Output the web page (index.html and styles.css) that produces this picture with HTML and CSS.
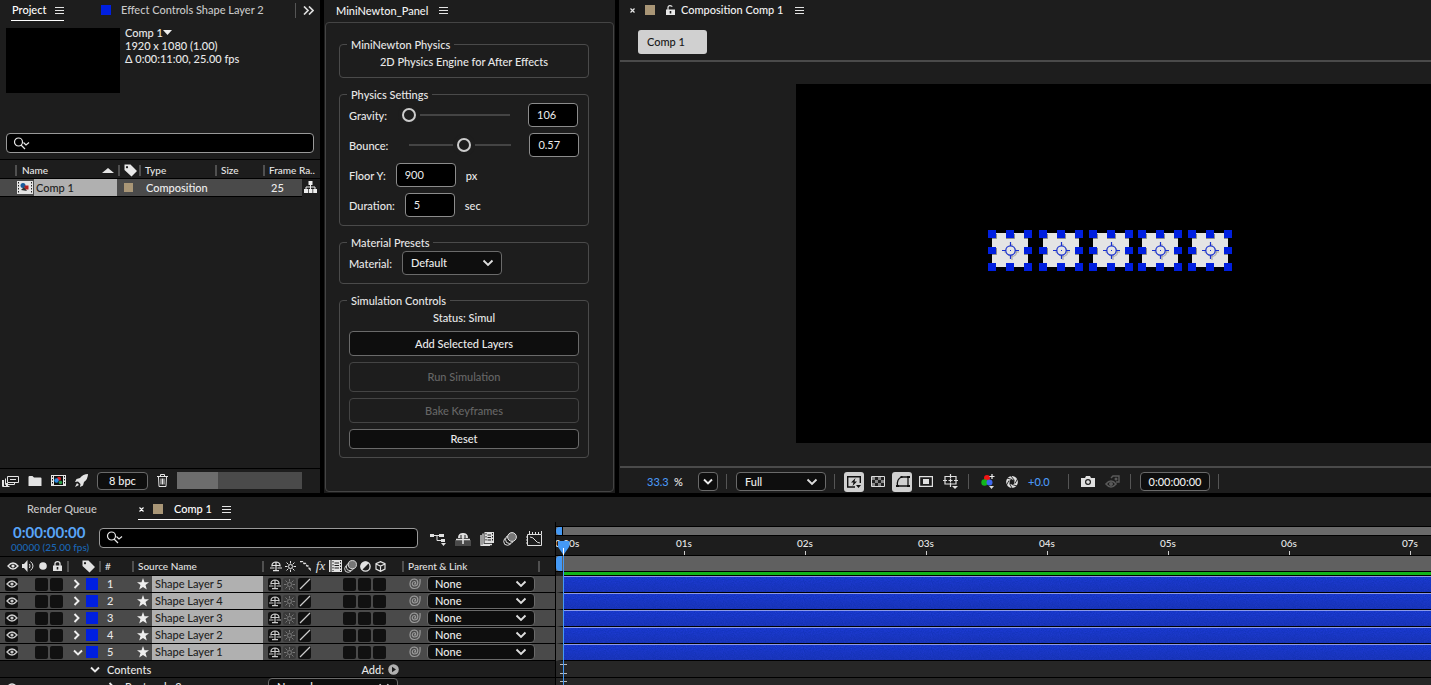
FILE: index.html
```html
<!DOCTYPE html>
<html lang="en">
<head>
<meta charset="utf-8">
<title>Comp 1</title>
<link rel="stylesheet" href="styles.css">
</head>
<body>
<svg class="sprite" aria-hidden="true">
  <symbol id="menu" viewBox="0 0 9 9"><path d="M0 1.5h9M0 4.5h9M0 7.5h9" stroke="currentColor" fill="none"/></symbol>
  <symbol id="close" viewBox="0 0 7 7"><path d="M1.500 1.500l4 4M5.500 1.500l-4 4" stroke="currentColor" stroke-width="1.200" fill="none"/></symbol>
  <symbol id="search" viewBox="0 0 18 13"><circle cx="5.5" cy="5" r="4" stroke="currentColor" stroke-width="1.2" fill="none"/><path d="M8 8l4 4M10.500 5.500l2.500 2.500 3-2.500" stroke="currentColor" stroke-width="1.2" fill="none"/></symbol>
  <symbol id="tag" viewBox="0 0 13 13"><path fill-rule="evenodd" d="M.5.5h6l6.500 6.500-5.500 5.500L.5 6zM3 2a1.100 1.100 0 1 0 .01 0z" fill="currentColor"/></symbol>
  <symbol id="film" viewBox="0 0 16 13"><path d="M0 0h16v13H0z" fill="#e4e4e4"/><path d="M1.500 1v11M14.500 1v11" stroke="#222" stroke-width="1" stroke-dasharray="1.500 1.500"/><circle cx="6" cy="4.500" r="2.500" fill="#175a9c"/><rect x="7.500" y="4.500" width="4" height="4" fill="#b52020"/><path d="M4 9l3-3 3 4z" fill="#333"/></symbol>
  <symbol id="comp" viewBox="0 0 15 11"><path d="M0 0h15v11H0z" fill="#e6e6e6"/><path d="M3 1h9v9H3z" fill="#111"/><path d="M1.500 1v9M13.500 1v9" stroke="#111" stroke-dasharray="1.500 1.500"/><circle cx="8" cy="3.800" r="2" fill="#d22"/><circle cx="5.500" cy="5.500" r="2.200" fill="#2a8de0"/><circle cx="9.500" cy="7.500" r="1.800" fill="#2b9c46"/></symbol>
  <symbol id="tree" viewBox="0 0 13 13"><path d="M4.500 0h4v4h-4zM0 8h4v4H0zM4.700 8h3.800v4H4.700zM9.200 8H13v4H9.200z" fill="currentColor"/><path d="M6.500 4v4M2 8V6h9v2" stroke="currentColor" fill="none"/></symbol>
  <symbol id="interpret" viewBox="0 0 17 12"><path d="M5.500 1.500h11v6h-11zM8 4.500h6" stroke="currentColor" fill="none"/><path d="M3.500 3.500v6h9V8M.5 5v6.500h7" stroke="currentColor" fill="none"/><path d="M0 5h2v6H0zM4 8h2v3H4z" fill="currentColor"/></symbol>
  <symbol id="folder" viewBox="0 0 13 10"><path d="M0 1q0-1 1-1h3l1.500 1.500H12q1 0 1 1V10H0z" fill="currentColor"/></symbol>
  <symbol id="rocket" viewBox="0 0 13 13"><path d="M13 0Q8 0 5 4L1.500 5 0 8l3-.5L5.500 10 5 13l3-1.500L9 8q4-3 4-8zM2 9l2 2-4 2z" fill="currentColor"/></symbol>
  <symbol id="trash" viewBox="0 0 11 13"><path d="M0 2.500h11M3.500 2V.5h4V2M1.500 3l.5 9.500h7l.5-9.500M4 4.500v6M5.500 4.500v6M7 4.500v6" stroke="currentColor" fill="none"/></symbol>
  <symbol id="unlock" viewBox="0 0 9 10"><path fill-rule="evenodd" d="M0 4.500h9V10H0zM3.700 6v2.500h1.600V6z" fill="currentColor"/><path d="M2 5V2.500Q2 .7 4 .7t2 1" stroke="currentColor" stroke-width="1.200" fill="none"/></symbol>
  <symbol id="lock" viewBox="0 0 9 10"><path fill-rule="evenodd" d="M0 4.500h9V10H0zM3.700 6v2.500h1.600V6z" fill="currentColor"/><path d="M2 5V2.700Q2 .7 4.500.7T7 2.700V5" stroke="currentColor" stroke-width="1.300" fill="none"/></symbol>
  <symbol id="eye" viewBox="0 0 12 10"><path d="M1 5q5-6 10 0-5 6-10 0z" stroke="currentColor" stroke-width="1.300" fill="none"/><circle cx="6" cy="5" r="1.600" fill="currentColor"/></symbol>
  <symbol id="speaker" viewBox="0 0 12 12"><path d="M0 4h2l3.500-4v12L2 8H0z" fill="currentColor"/><path d="M7.500 4q1 2 0 4M8.500 1.500q5 4.500 0 9" stroke="currentColor" fill="none"/></symbol>
  <symbol id="dot" viewBox="0 0 8 8"><circle cx="4" cy="4" r="3.800" fill="currentColor"/></symbol>
  <symbol id="shy" viewBox="0 0 12 11"><path d="M2 5.500V4Q2.500 1 6 1t4 3v1.500M6 1v9M0 7h4.500M7.500 7H12M3 9.700h6M2 4.500h8" stroke="currentColor" stroke-width="1.200" fill="none"/></symbol>
  <symbol id="sun" viewBox="0 0 11 11"><circle cx="5.500" cy="5.500" r="2" stroke="currentColor" fill="none"/><path d="M5.500 0v2.500M5.500 8.500V11M0 5.500h2.500M8.500 5.500H11M1.500 1.500l2 2M7.500 7.500l2 2M9.500 1.500l-2 2M3.500 7.500l-2 2" stroke="currentColor" fill="none"/></symbol>
  <symbol id="slash" viewBox="0 0 12 12"><path d="M1 11L11 1" stroke="currentColor" stroke-width="1.300"/></symbol>
  <symbol id="quality" viewBox="0 0 11 11"><path d="M0 .5h2.500l1.500 2h1.500l1.500 2.500h1l1.500 3H11V10" stroke="currentColor" stroke-width="1.300" fill="none" stroke-dasharray="3 1"/></symbol>
  <symbol id="blend" viewBox="0 0 14 14"><path d="M4.500 0h9.500v11H4.500z" fill="currentColor"/><path d="M6 1v9M12.500 1v9" stroke="#1d1d1d" stroke-dasharray="1.500 1.500"/><path d="M7.500 3h3.500M7.500 5.500h3.500M7.500 8h3.500" stroke="#1d1d1d"/><path d="M3 1.500V12.500H12M1 3v10.500h9" stroke="currentColor" stroke-width="1.300" fill="none"/></symbol>
  <symbol id="blendcol" viewBox="0 0 13 12"><path d="M2.500 0H13v12H2.500zM0 0h1.500v12H0z" fill="currentColor"/><path d="M4 1v10M11.500 1v10" stroke="#1d1d1d" stroke-dasharray="1.500 1.500"/><path d="M5.500 3h4.500M5.500 5.500h4.500M5.500 8h4.500" stroke="#1d1d1d"/></symbol>
  <symbol id="blur" viewBox="0 0 14 14"><circle cx="4.500" cy="9.500" r="3.800" stroke="currentColor" fill="#1d1d1d"/><circle cx="6.500" cy="7.500" r="4" stroke="currentColor" fill="#1d1d1d"/><circle cx="9" cy="5" r="4.400" stroke="currentColor" fill="#777"/></symbol>
  <symbol id="adjust" viewBox="0 0 11 11"><circle cx="5.500" cy="5.500" r="4.600" stroke="currentColor" stroke-width="1.400" fill="none"/><path d="M9 2A4.800 4.800 0 0 0 2 9z" fill="currentColor"/></symbol>
  <symbol id="cube" viewBox="0 0 11 11"><path d="M5.500.6l4.500 2v5.500l-4.500 2.300L1 8.100V2.600zM1 3l4.500 2L10 3M5.500 5v5" stroke="currentColor" stroke-width="1.200" fill="none"/></symbol>
  <symbol id="star" viewBox="0 0 12 12"><path d="M6 0l1.500 4.200H12L8.500 7l1.300 4.500L6 8.900 2.200 11.500 3.500 7 0 4.200h4.500z" fill="currentColor"/></symbol>
  <symbol id="right" viewBox="0 0 7 10"><path d="M1.500 1l4 4-4 4" stroke="currentColor" stroke-width="1.900" fill="none"/></symbol>
  <symbol id="down" viewBox="0 0 10 7"><path d="M1 1.500l4 4 4-4" stroke="currentColor" stroke-width="1.900" fill="none"/></symbol>
  <symbol id="spiral" viewBox="0 0 12 12"><path d="M11 1q1 10-6 9.500Q.8 10 1 5.500 1.300 1 5.700 1 9 1.500 8.800 5 8.500 8 5.800 8 3.200 7.800 3.300 5.500 3.500 3.500 5.500 3.500 7 4 6.500 5.800H5" stroke="currentColor" stroke-width="1.200" fill="none"/></symbol>
  <symbol id="flow" viewBox="0 0 16 14"><path d="M0 2h4v3H0zM9 2h5v3H9zM11 7h4v3h-4z" fill="currentColor"/><path d="M3 3.500h7M7 3.500v5h4" stroke="currentColor" fill="none"/><path d="M11 11h5l-2.500 3z" fill="currentColor"/></symbol>
  <symbol id="shymaster" viewBox="0 0 16 14"><path d="M0 8h16v6H0z" fill="#4a4a4a"/><path d="M3 6q0-5 5-5t5 5z" fill="currentColor"/><path d="M8 1v11M1 7.500h14" stroke="currentColor" stroke-width="1.600"/><path d="M6 3v3M10 3v3" stroke="#222"/></symbol>
  <symbol id="graph" viewBox="0 0 17 16"><path d="M1.500 3.500h14v11h-14z" stroke="currentColor" fill="none"/><path d="M4 6q3 0 5 3t5 3M3.500 3V0M6.500 3V1M9.500 3V1M12.500 3V1M15.500 3V0M1 6H0M1 9H0M1 12H0" stroke="currentColor" fill="none"/></symbol>
  <symbol id="fast" viewBox="0 0 14 12"><path d="M8 11H.7V.7h12.600V7" stroke="#111" stroke-width="1.400" fill="none"/><path d="M8.500 2L4 6.500h2.500L5.500 10 10 5.500H7.500zM9 9h5l-2.500 3z" fill="#111"/></symbol>
  <symbol id="checker" viewBox="0 0 14 11"><path d="M.5.5h13v10H.5z" fill="#222" stroke="#ddd"/><path d="M1 1h3v3H1zM7 1h3v3H7zM4 4h3v3H4zM10 4h3v3h-3zM1 7h3v3H1zM7 7h3v3H7z" fill="#888"/></symbol>
  <symbol id="mask" viewBox="0 0 15 13"><path d="M2.500 11Q1.500 4 6.500 2H13v9z" stroke="#111" stroke-width="1.300" fill="none"/><path d="M1 10h3v2H1zM12 10h3v2h-3zM12 1h3v2h-3zM5.500 1h2v2h-2z" fill="#111"/></symbol>
  <symbol id="roi" viewBox="0 0 14 11"><path d="M.6.6h12.800v9.800H.6z" stroke="currentColor" stroke-width="1.200" fill="none"/><path d="M4 3h6v5H4z" fill="currentColor"/></symbol>
  <symbol id="guides" viewBox="0 0 15 15"><path d="M2 2.500h11v7.500H2zM7.500 0v4M7.500 9v4M0 6.500h4M11 6.500h4M5.500 6.500h4M7.500 4.500v4" stroke="currentColor" stroke-width="1.200" fill="none"/><path d="M9 12h6l-3 3z" fill="currentColor"/></symbol>
  <symbol id="rgb" viewBox="0 0 14 15"><circle cx="6" cy="4" r="3" fill="#f01414"/><circle cx="3.500" cy="8.500" r="3.200" fill="#12b51b"/><circle cx="8.500" cy="8.500" r="3" fill="#3e68f0"/><path d="M11 0v5M8.500 2.500h5" stroke="#eee" stroke-width="1.200"/><path d="M8 12h5l-2.500 3z" fill="#ddd"/></symbol>
  <symbol id="shutter" viewBox="0 0 12 12"><circle cx="6" cy="6" r="4.200" stroke="currentColor" stroke-width="3.400" fill="none"/><path d="M5 0l3.500 4.500M11.500 3L9 7.500M11 10l-5-1.500M6 12L3.500 7.500M.5 9L3 4.500M1 2l5 1.500" stroke="#1d1d1d" stroke-width=".9"/></symbol>
  <symbol id="camera" viewBox="0 0 14 11"><path d="M0 2h4l1-2h4l1 2h4v9H0z" fill="currentColor"/><circle cx="7" cy="6" r="2.400" stroke="#1d1d1d" stroke-width="1.200" fill="none"/></symbol>
  <symbol id="showsnap" viewBox="0 0 15 14"><path d="M1 9q5-6 10 0-5 6-10 0z" stroke="currentColor" stroke-width="1.600" fill="none"/><circle cx="6" cy="9" r="2" fill="currentColor"/><path d="M6 3l2-2h6v6h-3" stroke="currentColor" stroke-width="1.400" fill="none"/><circle cx="11" cy="4" r="1.500" fill="currentColor"/></symbol>
  <symbol id="play" viewBox="0 0 11 11"><circle cx="5.500" cy="5.500" r="5.300" fill="#b0b0b0"/><path d="M4 2.800v5.400l4-2.700z" fill="#1d1d1d"/></symbol>
  <symbol id="ibeam" viewBox="0 0 7 10"><path d="M0 .5h7M0 9.500h7M3.500 0v10" stroke="currentColor" fill="none"/></symbol>
  <symbol id="shape" viewBox="0 0 44 41">
    <path d="M4 3h36v34H4z" fill="#e4e4e4"/>
    <path d="M8.500 4v4.500H4M26.500 4v4.500H18M36 8.500h4M8.500 18v6.500H4M36 24.500h4" stroke="#777" fill="none" opacity=".8"/>
    <g stroke="#aaa" fill="none" stroke-width="1.200"><circle cx="24" cy="22" r="4.500"/><path d="M24 14v16M16 22h15"/></g>
    <g stroke="#1730cf" fill="none" stroke-width="1.200"><circle cx="22.500" cy="20.500" r="4.700" fill="#e4e4e4"/><path d="M22.500 12v4M22.500 25v4M14 20.500h4M27 20.500h4"/></g><path d="M22 20h1v1h-1z" fill="#1730cf"/>
    <path d="M0 0h8v8H0zM18 0h8v8h-8zM36 0h8v8h-8zM0 17h8v7H0zM36 17h8v7h-8zM0 33h8v8H0zM18 33h8v8h-8zM36 33h8v8h-8z" fill="#001fe0"/>
  </symbol>
</svg>

<main class="app">
  <section class="panel project">
    <header class="tabs">
      <span class="tab active">Project <svg class="i9"><use href="#menu"/></svg></span>
      <span class="tab effect"><i class="chip blue"></i>Effect Controls Shape Layer 2</span>
      <span class="tab overflow"><svg width="11" height="9" viewBox="0 0 11 9"><path d="M1 .5l4 4-4 4M6 .5l4 4-4 4" stroke="#ddd" stroke-width="1.700" fill="none"/></svg></span>
    </header>
    <div class="info">
      <div class="thumb"></div>
      <div class="meta"><div>Comp 1<svg width="9" height="5" viewBox="0 0 9 5"><path d="M0 0h9L4.500 5z" fill="#eee"/></svg></div><div>1920 x 1080 (1.00)</div><div>Δ 0:00:11:00, 25.00 fps</div></div>
    </div>
    <label class="search"><svg width="18" height="13"><use href="#search"/></svg><input type="text" aria-label="Search project"></label>
    <table class="items">
      <colgroup><col class="c-name"><col class="c-tag"><col class="c-type"><col class="c-size"><col class="c-rate"><col class="c-end"></colgroup>
      <thead><tr>
        <th><span class="th name">Name<svg width="12" height="5" viewBox="0 0 12 5"><path d="M0 5h12L6 0z" fill="#e4e4e4"/></svg></span></th>
        <th><span class="th"><svg class="i13"><use href="#tag"/></svg></span></th>
        <th><span class="th">Type</span></th><th><span class="th">Size</span></th><th colspan="2"><span class="th rate">Frame Ra..</span></th>
      </tr></thead>
      <tbody><tr>
        <td><span class="file"><svg width="16" height="13"><use href="#film"/></svg><b>Comp 1</b></span></td>
        <td><i class="chip sand small"></i></td><td>Composition</td><td></td><td>25</td>
        <td class="tree"><svg class="i13"><use href="#tree"/></svg></td>
      </tr></tbody>
    </table>
    <footer class="project-foot">
      <svg width="17" height="12"><use href="#interpret"/></svg>
      <svg width="14" height="10"><use href="#folder"/></svg>
      <svg width="15" height="11"><use href="#comp"/></svg>
      <svg class="i13"><use href="#rocket"/></svg>
      <button class="box bpc">8 bpc</button>
      <svg width="11" height="13"><use href="#trash"/></svg>
      <div class="hscroll"><div></div></div>
    </footer>
  </section>

  <section class="panel newton">
    <header class="tabs"><span class="tab lit">MiniNewton_Panel <svg class="i9"><use href="#menu"/></svg></span></header>
    <form class="frame">
      <fieldset><legend>MiniNewton Physics</legend><p class="line">2D Physics Engine for After Effects</p></fieldset>
      <fieldset class="rows"><legend>Physics Settings</legend>
        <div class="row slide"><label for="g">Gravity:</label><input id="g" type="range" min="0" max="100" value="1"><input class="box w50" type="text" value="106" aria-label="Gravity value"></div>
        <div class="row slide"><label for="b">Bounce:</label><input id="b" type="range" min="0" max="100" value="57"><input class="box w50" type="text" value="0.57" aria-label="Bounce value"></div>
        <div class="row"><label for="f">Floor Y:</label><input id="f" class="box w60" type="text" value="900"><span>px</span></div>
        <div class="row"><label for="d">Duration:</label><input id="d" class="box w50" type="text" value="5"><span>sec</span></div>
      </fieldset>
      <fieldset class="rows"><legend>Material Presets</legend>
        <div class="row"><label for="m">Material:</label><select id="m" class="box material"><option>Default</option></select></div>
      </fieldset>
      <fieldset class="controls"><legend>Simulation Controls</legend>
        <p class="line">Status: Simul</p>
        <button type="button" class="box">Add Selected Layers</button>
        <button type="button" class="box tall" disabled>Run Simulation</button>
        <button type="button" class="box" disabled>Bake Keyframes</button>
        <button type="button" class="box short">Reset</button>
      </fieldset>
    </form>
  </section>

  <section class="panel viewer">
    <header class="tabs">
      <svg class="i7"><use href="#close"/></svg><i class="chip sand"></i><svg class="unlock" width="9" height="10"><use href="#unlock"/></svg>
      <span class="tab lit">Composition Comp 1 <svg class="i9"><use href="#menu"/></svg></span>
    </header>
    <div class="crumbs"><button>Comp 1</button></div>
    <div class="stage"><div class="canvas" id="canvas"></div></div>
    <footer class="viewer-foot">
      <span class="blue-text zoom">33.3</span><span class="percent">%</span>
      <button class="box pick" aria-label="Zoom"><svg width="10" height="7"><use href="#down"/></svg></button><i class="sep"></i>
      <select class="box full" aria-label="Resolution"><option>Full</option></select><i class="sep"></i>
      <div class="tools">
        <button class="on" aria-label="Fast previews"><svg width="14" height="12"><use href="#fast"/></svg></button>
        <button aria-label="Transparency grid"><svg width="14" height="11"><use href="#checker"/></svg></button>
        <button class="on" aria-label="Mask visibility"><svg width="15" height="13"><use href="#mask"/></svg></button>
        <button aria-label="Region of interest"><svg width="14" height="11"><use href="#roi"/></svg></button>
        <button aria-label="Guides"><svg width="15" height="15"><use href="#guides"/></svg></button>
      </div><i class="sep"></i>
      <div class="tools">
        <button aria-label="Channels"><svg width="14" height="15"><use href="#rgb"/></svg></button>
        <button aria-label="Exposure"><svg width="12" height="12"><use href="#shutter"/></svg></button>
      </div><span class="blue-text exposure">+0.0</span><i class="sep"></i>
      <div class="tools">
        <button aria-label="Snapshot"><svg width="14" height="11"><use href="#camera"/></svg></button>
        <button class="dim" aria-label="Show snapshot"><svg width="15" height="14"><use href="#showsnap"/></svg></button>
      </div><i class="sep"></i>
      <button class="box time">0:00:00:00</button><i class="sep"></i>
    </footer>
  </section>

  <section class="panel timeline">
    <header class="tabs">
      <span class="tab queue">Render Queue</span>
      <span class="tab active comp-tab"><svg class="i7"><use href="#close"/></svg><i class="chip sand"></i>Comp 1 <svg class="i9"><use href="#menu"/></svg></span>
    </header>
    <div class="tl-body">
      <div class="left">
        <div class="tl-tools">
          <div class="clock"><b>0:00:00:00</b><span>00000 (25.00 fps)</span></div>
          <label class="search"><svg width="18" height="13"><use href="#search"/></svg><input type="text" aria-label="Search layers"></label>
          <div class="tl-icons">
            <svg width="16" height="14"><use href="#flow"/></svg><svg width="16" height="14"><use href="#shymaster"/></svg><svg width="14" height="14"><use href="#blend"/></svg><svg width="14" height="14"><use href="#blur"/></svg><svg width="17" height="16"><use href="#graph"/></svg>
          </div>
        </div>
        <div class="head">
          <div class="cells"><span><svg width="12" height="10"><use href="#eye"/></svg></span><span><svg width="12" height="12"><use href="#speaker"/></svg></span><span><svg width="8" height="8"><use href="#dot"/></svg></span><span><svg width="9" height="10"><use href="#lock"/></svg></span></div>
          <div class="hcol h-tag"><svg class="i13"><use href="#tag"/></svg></div>
          <div class="hcol h-num">#</div>
          <div class="hcol h-name">Source Name</div>
          <div class="hcol h-sw"><div class="cells"><span><svg width="12" height="11"><use href="#shy"/></svg></span><span><svg width="11" height="11"><use href="#sun"/></svg></span><span><svg width="11" height="11"><use href="#quality"/></svg></span><span class="fx">fx</span><span><svg width="13" height="12"><use href="#blendcol"/></svg></span><span><svg width="13" height="13"><use href="#blur"/></svg></span><span><svg width="11" height="11"><use href="#adjust"/></svg></span><span><svg width="11" height="11"><use href="#cube"/></svg></span></div></div>
          <div class="hcol h-parent">Parent &amp; Link</div>
          <div class="hcol"></div>
        </div>
        <div id="layers"></div>
        <div class="prop contents"><svg width="10" height="7"><use href="#down"/></svg><span>Contents</span><button class="add">Add: <svg width="11" height="11"><use href="#play"/></svg></button></div>
        <div class="prop rect"><svg width="12" height="10"><use href="#eye"/></svg><svg class="rc" width="7" height="10"><use href="#right"/></svg><span>Rectangle 2</span><select class="box" aria-label="Blend mode"><option>Normal</option></select></div>
      </div>
      <div class="right">
        <div class="navbar"><i></i></div>
        <div class="ruler"><span>0:00s</span><span>01s</span><span>02s</span><span>03s</span><span>04s</span><span>05s</span><span>06s</span><span>07s</span></div>
        <div class="workarea"><i></i></div>
        <div class="cache"></div>
        <div id="bars"></div>
        <div class="keys"><svg width="7" height="10"><use href="#ibeam"/></svg></div>
        <div class="keys"><svg width="7" height="10"><use href="#ibeam"/></svg></div>
        <div class="playhead"><svg width="11" height="14" viewBox="0 0 11 14"><path d="M0 0h11v6L5.500 14 0 6z" fill="#4499f5"/><path d="M5 7h1v7H5z" fill="#fff"/></svg></div>
      </div>
    </div>
  </section>
</main>
<script src="script.js"></script>
</body>
</html>
```
FILE: styles.css
```css
* { box-sizing: border-box; }
html, body { height: 100%; }
body {
  margin: 0; background: #000; color: #e8e8e8; overflow: hidden;
  font: 500 11px/14px Lato, "Noto Sans", sans-serif;
}
button, input, select { font: inherit; color: inherit; margin: 0; }
button { border: 0; background: none; padding: 0; }
svg { flex: none; display: block; }
p { margin: 0; }
.sprite { position: absolute; width: 0; height: 0; }
.i7 { width: 7px; height: 7px; }
.i9 { width: 9px; height: 9px; }
.i13 { width: 13px; height: 13px; }

.app {
  height: 100vh; display: grid; gap: 4px;
  grid-template-columns: 320fr 291fr 812fr;
  grid-template-rows: minmax(0, 493fr) minmax(0, 188fr);
}
.panel { background: #1d1d1d; display: flex; flex-direction: column; min-width: 0; min-height: 0; overflow: hidden; }
.timeline { grid-column: 1 / -1; }

.tabs { display: flex; height: 22px; flex: none; align-items: flex-start; white-space: nowrap; }
.tab { display: flex; align-items: center; height: 21px; color: #c8c8c8; }
.tab.active { color: #fff; border-bottom: 1px solid #fff; }
.tab.lit { color: #f2f2f2; }
.tab .i9 { margin-left: 11px; color: #e4e4e4; }
.chip { width: 10px; height: 10px; flex: none; display: block; }
.chip.small { width: 9px; height: 9px; }
.blue { background: #001fe0; }
.sand { background: #a99676; }
.box { background: #0e0e0e; border: 1px solid #6a6a6a; border-radius: 4px; color: #ececec; }
select.box {
  appearance: none; padding: 0 8px;
  background: #0e0e0e url("data:image/svg+xml,%3Csvg xmlns='http://www.w3.org/2000/svg' width='12' height='8'%3E%3Cpath d='M1.500 1.500l4.500 4.500 4.500-4.500' fill='none' stroke='%23ddd' stroke-width='1.900'/%3E%3C/svg%3E") no-repeat right 7px center;
}
.search { display: flex; align-items: center; height: 20px; background: #000; border: 1px solid #999; border-radius: 4px; padding-left: 6px; }
.search input { flex: 1; min-width: 0; background: none; border: 0; outline: 0; padding: 0; }

/* Project */
.project .tab.active { margin-left: 11px; padding-left: 1px; width: 53px; }
.project .tab.active .i9 { margin-left: auto; }
.effect { margin-left: 37px; gap: 10px; height: 20px; }
.overflow { margin-left: auto; padding: 0 6px; }
.overflow::before { content: ""; width: 1px; height: 15px; background: #555; margin-right: 7px; }
.info { display: flex; gap: 5px; padding: 4px 6px 0; }
.thumb { width: 114px; height: 65px; margin-top: 2px; background: #000; }
.meta { line-height: 13px; white-space: nowrap; }
.meta div:first-child { display: flex; align-items: center; }
.project .search { margin: 40px 6px 6px; flex: none; }
.items { border-collapse: collapse; width: 100%; table-layout: fixed; border-top: 1px solid #000; }
.items th, .items td { padding: 0; font-weight: 500; text-align: left; white-space: nowrap; }
.items th { height: 19px; padding-top: 2px; font-size: 10px; border-bottom: 1px solid #000; }
.items td { height: 18px; background: #4a4a4a; border-bottom: 1px solid #000; color: #eee; }
.c-name { width: 118px; } .c-tag { width: 21px; } .c-type { width: 76px; } .c-size { width: 48px; } .c-end { width: 18px; }
.th { display: flex; align-items: center; height: 12px; gap: 4px; }
.th::before { content: ""; width: 2px; height: 11px; background: #505050; flex: none; }
.th.name { margin-left: 15px; gap: 5px; }
.th.name svg { margin-left: auto; margin-right: 4px; }
.th.rate { padding-right: 5px; border: 0; }
.th.rate::after { content: ""; width: 2px; height: 11px; background: #505050; margin-left: auto; }
.file { display: flex; align-items: center; margin-left: 17px; gap: 1px; }
.file b { flex: 1; background: #b0b0b0; color: #222; font-weight: 500; line-height: 17px; padding-left: 2px; margin-right: 1px; }
.items td .chip { margin-left: 6px; }
.items td:nth-child(3) { padding-left: 7px; }
.items td:nth-child(5) { padding-left: 8px; }
.items td.tree { background: none; border: 0; padding-left: 2px; }
.project-foot { margin-top: auto; flex: none; height: 25px; border-top: 1px solid #000; display: flex; align-items: center; gap: 9px; padding: 0 0 1px 2px; color: #e4e4e4; }
.bpc { width: 51px; height: 18px; }
.hscroll { flex: 1; margin-right: 18px; height: 17px; background: #4a4a4a; }
.hscroll div { width: 33%; height: 100%; background: #6d6d6d; }

/* MiniNewton */
.newton .tabs { padding-left: 12px; }
.frame { margin: 0 1px 1px; flex: 1; border: 1px solid #444; border-radius: 4px; padding: 15px 24px 0 13px; display: flex; flex-direction: column; gap: 10px; }
fieldset { margin: 0; border: 1px solid #4a4a4a; border-radius: 4px; padding: 4px 9px 8px; min-width: 0; }
legend { margin-left: -2px; padding: 0 4px; line-height: 13px; height: 13px; }
.line { text-align: center; }
.rows { padding-top: 2px; }
.row { display: flex; align-items: center; gap: 10px; height: 24px; }
.row + .row { margin-top: 6px; }
.row label, .row span { padding-top: 2px; }
.row .box { height: 24px; }
.row input.box { background: #000; border-color: #8c8c8c; padding: 0 8px 2px; font-weight: 400; }
.w50 { width: 50px; }
.w60 { width: 60px; }
.material { width: 100px; }
.slide { gap: 14px; }
.slide .box { margin-left: 3px; }
input[type="range"] { appearance: none; width: 110px; height: 16px; background: linear-gradient(#444, #444) 7px center / 102px 2px no-repeat; }
input[type="range"]::-webkit-slider-thumb { appearance: none; width: 14px; height: 14px; border: 2px solid #ccc; border-radius: 50%; background: #1d1d1d; box-shadow: 0 0 0 4px #1d1d1d; }
.controls > .box { display: block; width: 100%; height: 25px; margin-top: 6px; }
.controls > .tall { height: 30px; }
.controls > .short { height: 20px; }
.controls > .box:disabled { background: none; border-color: #444; color: #666; }

/* Composition viewer */
.viewer .tabs { padding-left: 10px; align-items: center; height: 20px; }
.viewer .chip { margin: 0 15px 0 9px; }
.viewer .unlock { margin: 0 6px 0 -4px; }
.viewer .tab .i9 { margin-left: 12px; }
.crumbs { flex: none; padding: 10px 18px 6px; margin-left: 1px; border-bottom: 2px solid #4a4a4a; }
.crumbs button { display: block; width: 69px; height: 24px; background: #d0d0d0; color: #181818; border-radius: 3px; text-align: left; padding-left: 9px; }
.stage { flex: 1; min-height: 0; padding: 22px 0 23px 177px; }
.canvas { position: relative; height: 100%; background: #000; overflow: hidden; }
.canvas svg { position: absolute; width: 44px; height: 41px; }
.viewer-foot { flex: none; height: 27px; margin-left: 1px; border-top: 2px solid #4a4a4a; display: flex; align-items: center; padding: 2px 0 0 27px; white-space: nowrap; }
.viewer-foot > * { flex: none; }
.blue-text { color: #4a98f5; }
.zoom { width: 27px; }
.percent { width: 10px; }
.pick { width: 20px; height: 19px; margin-left: 14px; display: grid; place-items: center; }
.sep { width: 1px; height: 15px; background: #555; margin: 0 9px 0 8px; }
.full { width: 90px; height: 19px; }
.tools { display: flex; gap: 4px; }
.tools button { width: 20px; height: 20px; display: grid; place-items: center; color: #e0e0e0; border-radius: 3px; }
.tools .on { background: #d0d0d0; }
.tools .dim { color: #5a5a5a; }
.exposure { width: 22px; margin: 0 10px 0 6px; }
.time { width: 70px; height: 19px; }

/* Timeline */
.timeline .tabs { height: 25px; padding-top: 2px; }
.queue { margin-left: 27px; width: 111px; height: 20px; }
.comp-tab { width: 93px; }
.comp-tab .chip { margin: 0 11px 0 8px; }
.comp-tab .i9 { margin-left: auto; }
.tl-body { flex: 1; min-height: 0; display: flex; }
.left { width: 556px; flex: none; border-right: 1px solid #000; white-space: nowrap; }
.tl-tools { height: 35px; display: flex; align-items: center; padding: 0 0 1px 11px; border-bottom: 1px solid #000; }
.clock { width: 88px; display: flex; flex-direction: column; }
.clock b { font-size: 15px; line-height: 16px; color: #58a5f8; padding-left: 2px; }
.clock span { font-size: 10px; line-height: 14px; color: #1a66b5; }
.tl-tools .search { width: 319px; margin-bottom: 2px; }
.tl-icons { display: flex; align-items: center; gap: 9px; margin-left: 12px; color: #e0e0e0; }
.head { height: 19px; display: flex; align-items: center; padding-left: 5px; font-size: 10px; border-bottom: 1px solid #000; color: #e2e2e2; }
.cells { display: flex; }
.cells > span { width: 15px; height: 14px; display: grid; place-items: center; flex: none; }
.head > .cells { width: 62px; }
.fx { font: italic 13px/14px "Liberation Serif", serif; }
.hcol { display: flex; align-items: center; height: 14px; gap: 4px; }
.hcol::before { content: ""; width: 2px; height: 11px; background: #505050; flex: none; }
.h-tag { width: 32px; } .h-tag svg { margin-left: 9px; }
.h-num { width: 33px; }
.h-name { width: 130px; }
.h-sw { width: 140px; }
.h-parent { width: 136px; }
.layer {
  height: 17px; display: grid; align-items: center; background: #4a4a4a; border-bottom: 1px solid #000; padding-left: 5px;
  grid-template-columns: 30px 15px 23px 13px 21px 30px 15px 116px 15px 15px 45px 15px 15px 36px 18px 108px;
}
.cell { width: 13px; height: 13px; background: #111; border-radius: 2px; display: grid; place-items: center; color: #ccc; }
.cell.soft { background: #3a3a3a; color: #777; }
.swatch { width: 12px; height: 12px; background: #001fe0; }
.layer > svg { color: #eee; }
.layer .lname { width: 111px; height: 16px; line-height: 16px; background: #b0b0b0; color: #222; padding-left: 3px; }
.layer .spiral { color: #999; }
.layer .box { height: 16px; line-height: 14px; padding: 0 7px; }
.prop { display: flex; align-items: center; height: 17px; border-bottom: 1px solid #000; }
.contents { padding: 1px 0 0 90px; gap: 7px; }
.add { display: flex; align-items: center; gap: 4px; margin: 0 156px 0 auto; }
.rect { padding-left: 6px; height: 19px; }
.rect .rc { margin: 0 10px 0 90px; }
.rect .box { margin-left: auto; margin-right: 157px; width: 130px; height: 18px; }
.right { flex: 1; min-width: 0; position: relative; overflow: hidden; margin-top: 4px; }
.navbar { height: 10px; border: solid #000; border-width: 1px 0; background: #6a6a6a; }
.navbar i { display: block; width: 7px; height: 8px; background: #4499f5; border-radius: 4px 0 0 4px; border-right: 1px solid #000; }
.ruler { height: 19px; display: flex; padding-left: 7px; }
.ruler span { flex: 0 0 121px; font-size: 10px; line-height: 14px; position: relative; text-indent: -8px; }
.ruler span::before { content: ""; position: absolute; left: 0; top: 15px; width: 1px; height: 4px; background: #ccc; }
.workarea { height: 17px; border: solid #000; border-width: 1px 0; background: #606060; }
.workarea i { display: block; width: 6px; height: 15px; background: #4499f5; border-radius: 4px 0 0 4px; }
.cache { height: 4px; margin-left: 7px; background: #12b51b; border-bottom: 1px solid #000; }
.bar {
  height: 17px; border-bottom: 1px solid #000; border-left: 7px solid #4a4a4a;
  background:
    linear-gradient(#8c9ae8, #8c9ae8) top / 100% 1px no-repeat,
    url("data:image/svg+xml,%3Csvg xmlns='http://www.w3.org/2000/svg' width='128' height='64'%3E%3Cfilter id='n' x='0' y='0' width='1' height='1'%3E%3CfeTurbulence type='fractalNoise' baseFrequency='.9' numOctaves='2' stitchTiles='stitch'/%3E%3CfeColorMatrix values='0 0 0 0 0 0 0 0 0 .02 0 0 0 0 .3 .5 0 0 0 0'/%3E%3C/filter%3E%3Crect width='128' height='64' filter='url(%23n)'/%3E%3C/svg%3E"),
    linear-gradient(#203ee0, #2038c4);
}
.keys { height: 17px; background: #262626; border-bottom: 1px solid #000; padding: 3px 0 0 4px; color: #bbb; }
.playhead { position: absolute; left: 2px; top: 15px; bottom: 0; width: 11px; background: linear-gradient(#4499f5, #4499f5) center / 1px 100% no-repeat; }
```
FILE: script.js
```js
const icon = (id, w, h, cls = "") => `<svg class="${cls}" width="${w}" height="${h}"><use href="#${id}"/></svg>`;

const layers = [5, 4, 3, 2, 1];
document.getElementById("layers").innerHTML = layers.map((n, i) => `
  <div class="layer">
    <span class="cell">${icon("eye", 12, 10)}</span><span class="cell"></span><span class="cell"></span>
    ${n === 1 ? icon("down", 10, 7) : icon("right", 7, 10)}
    <span class="swatch"></span><span>${i + 1}</span>${icon("star", 12, 12)}
    <span class="lname">Shape Layer ${n}</span>
    <span class="cell">${icon("shy", 12, 11)}</span><span class="cell soft">${icon("sun", 11, 11)}</span><span class="cell">${icon("slash", 12, 12)}</span>
    <span class="cell"></span><span class="cell"></span><span class="cell"></span>
    ${icon("spiral", 12, 12, "spiral")}
    <select class="box" aria-label="Parent of Shape Layer ${n}"><option>None</option></select>
  </div>`).join("");

document.getElementById("bars").innerHTML = layers.map(() => `<div class="bar"></div>`).join("");

// Left edge of each selected shape on the composition canvas.
document.getElementById("canvas").innerHTML = [192, 243, 293, 342, 392]
  .map(x => `<svg style="left:${x}px;top:146px"><use href="#shape"/></svg>`).join("");
```
